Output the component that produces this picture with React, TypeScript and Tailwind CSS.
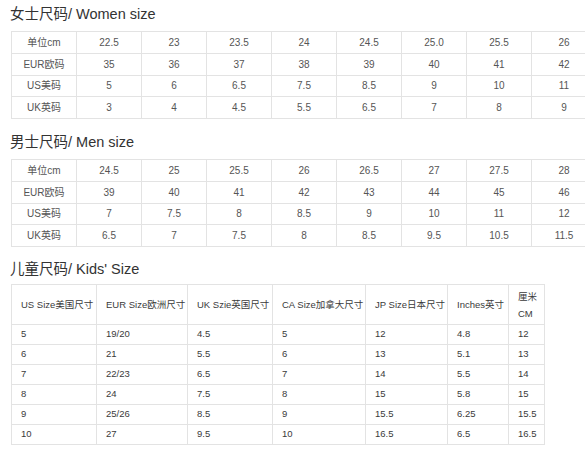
const women = [
  ['单位cm', '22.5', '23', '23.5', '24', '24.5', '25.0', '25.5', '26'],
  ['EUR欧码', '35', '36', '37', '38', '39', '40', '41', '42'],
  ['US美码', '5', '6', '6.5', '7.5', '8.5', '9', '10', '11'],
  ['UK英码', '3', '4', '4.5', '5.5', '6.5', '7', '8', '9'],
];

const men = [
  ['单位cm', '24.5', '25', '25.5', '26', '26.5', '27', '27.5', '28'],
  ['EUR欧码', '39', '40', '41', '42', '43', '44', '45', '46'],
  ['US美码', '7', '7.5', '8', '8.5', '9', '10', '11', '12'],
  ['UK英码', '6.5', '7', '7.5', '8', '8.5', '9.5', '10.5', '11.5'],
];

const kidsHead = [
  'US Size美国尺寸',
  'EUR Size欧洲尺寸',
  'UK Szie英国尺寸',
  'CA Size加拿大尺寸',
  'JP Size日本尺寸',
  'Inches英寸',
  '厘米 CM',
];

const kids = [
  ['5', '19/20', '4.5', '5', '12', '4.8', '12'],
  ['6', '21', '5.5', '6', '13', '5.1', '13'],
  ['7', '22/23', '6.5', '7', '14', '5.5', '14'],
  ['8', '24', '7.5', '8', '15', '5.8', '15'],
  ['9', '25/26', '8.5', '9', '15.5', '6.25', '15.5'],
  ['10', '27', '9.5', '10', '16.5', '6.5', '16.5'],
];

const font = { fontFamily: '"Liberation Sans", "Noto Sans CJK SC", sans-serif' };

function Title({ children }: { children: React.ReactNode }) {
  return <h2 className="h-5 pl-[10px] text-[14.5px] leading-5 font-normal text-[#333]">{children}</h2>;
}

function SizeGrid({ rows }: { rows: string[][] }) {
  return (
    <div className="ml-[11px] grid w-max grid-cols-[repeat(9,65px)] auto-rows-[21.75px] border-l border-t border-[#e3e3e3]">
      {rows.flat().map((v, i) => (
        <div
          key={i}
          className="flex items-center justify-center border-r border-b border-[#e3e3e3] text-[10px] text-[#555]"
        >
          {v}
        </div>
      ))}
    </div>
  );
}

export default function App() {
  return (
    <div className="w-[585px] h-[456px] overflow-hidden bg-white" style={font}>
      <div className="pt-[4px]">
        <Title>女士尺码/ Women size</Title>
        <div className="mt-[7px]">
          <SizeGrid rows={women} />
        </div>
      </div>
      <div className="mt-[13px]">
        <Title>男士尺码/ Men size</Title>
        <div className="mt-[7px]">
          <SizeGrid rows={men} />
        </div>
      </div>
      <div className="mt-[12px]">
        <Title>儿童尺码/ Kids' Size</Title>
        <div className="mt-[5px] ml-[11px] grid w-max grid-cols-[85px_91px_85px_93px_82px_61px_36px] border-l border-t border-[#e3e3e3] text-[9.5px] text-[#3a3a3a]">
          {kidsHead.map((h, i) => (
            <div
              key={h}
              className={`flex h-10 items-center border-r border-b border-[#e3e3e3] pl-[9px] leading-[17px] ${i < 6 ? 'whitespace-nowrap' : ''}`}
            >
              {h}
            </div>
          ))}
          {kids.flat().map((v, i) => (
            <div key={i} className="flex h-5 items-center border-r border-b border-[#e3e3e3] pl-[9px]">
              {v}
            </div>
          ))}
        </div>
      </div>
    </div>
  );
}
